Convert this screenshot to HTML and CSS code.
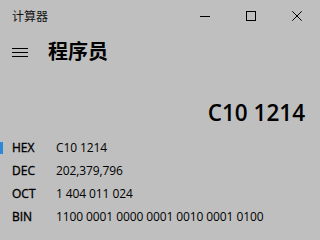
FILE: index.html
```html
<!DOCTYPE html>
<html lang="zh-CN">
<head>
<meta charset="utf-8">
<title>计算器</title>
<link rel="stylesheet" href="styles.css">
</head>
<body>
<div class="app">
  <div class="titlebar">
    <span class="app-title">计算器</span>
    <div class="controls">
      <span class="ctl">
        <svg width="10" height="10" viewBox="0 0 10 10"><line x1="0" y1="5.5" x2="10" y2="5.5" stroke="#000" stroke-width="1"/></svg>
      </span>
      <span class="ctl">
        <svg width="10" height="10" viewBox="0 0 10 10"><rect x="0.5" y="0.5" width="9" height="9" fill="none" stroke="#000" stroke-width="1"/></svg>
      </span>
      <span class="ctl">
        <svg width="10" height="10" viewBox="0 0 10 10"><path d="M0.3 0.3 L9.7 9.7 M9.7 0.3 L0.3 9.7" stroke="#000" stroke-width="1" fill="none"/></svg>
      </span>
    </div>
  </div>
  <div class="header">
    <span class="menu">
      <svg width="16" height="16" viewBox="0 0 16 16"><path d="M0 4.5 H16 M0 8.5 H16 M0 12.5 H16" stroke="#000" stroke-width="1" fill="none"/></svg>
    </span>
    <span class="mode">程序员</span>
  </div>
  <div class="display">C10 1214</div>
  <div class="radix">
    <div class="row selected"><span class="mark"></span><span class="label">HEX</span><span class="value">C10 1214</span></div>
    <div class="row"><span class="mark"></span><span class="label">DEC</span><span class="value">202,379,796</span></div>
    <div class="row"><span class="mark"></span><span class="label">OCT</span><span class="value">1 404 011 024</span></div>
    <div class="row"><span class="mark"></span><span class="label">BIN</span><span class="value">1100 0001 0000 0001 0010 0001 0100</span></div>
  </div>
</div>
</body>
</html>
```

FILE: styles.css
```css
html, body {
  margin: 0;
  padding: 0;
  background: #bfbfbf;
}
.app {
  width: 320px;
  height: 235px;
  overflow: hidden;
  background: #bfbfbf;
  color: #000;
  font-family: "Open Sans", "Noto Sans CJK SC", sans-serif;
  display: flex;
  flex-direction: column;
}
.titlebar {
  height: 32px;
  display: flex;
  align-items: center;
  justify-content: space-between;
}
.app-title {
  padding-left: 12px;
  font-family: "Noto Sans CJK SC", sans-serif;
  font-size: 12px;
  line-height: 32px;
  color: #111;
}
.controls {
  display: flex;
  height: 32px;
}
.ctl {
  width: 46px;
  height: 32px;
  display: flex;
  align-items: center;
  justify-content: center;
}
.ctl svg { display: block; }
.header {
  height: 40px;
  display: flex;
  align-items: center;
  padding-left: 12px;
}
.menu {
  width: 16px;
  height: 16px;
  display: flex;
}
.menu svg { display: block; }
.mode {
  margin-left: 20px;
  font-family: "Noto Sans CJK SC", sans-serif;
  font-weight: 700;
  font-size: 20px;
  line-height: 28px;
  margin-top: -2px;
}
.display {
  margin-top: 26px;
  height: 30px;
  line-height: 30px;
  font-size: 22.5px;
  font-weight: 600;
  text-align: right;
  padding-right: 15px;
}
.radix {
  margin-top: 8px;
  display: flex;
  flex-direction: column;
}
.row {
  height: 23px;
  line-height: 23px;
  display: grid;
  grid-template-columns: 12px 44px 1fr;
  align-items: center;
  font-size: 12px;
  white-space: nowrap;
}
.mark {
  width: 3px;
  height: 12px;
}
.row.selected .mark {
  background: #2b88d8;
}
.label {
  font-weight: 400;
  -webkit-text-stroke: 0.35px #000;
}
.value {
  font-weight: 400;
  letter-spacing: -0.1px;
}
```
